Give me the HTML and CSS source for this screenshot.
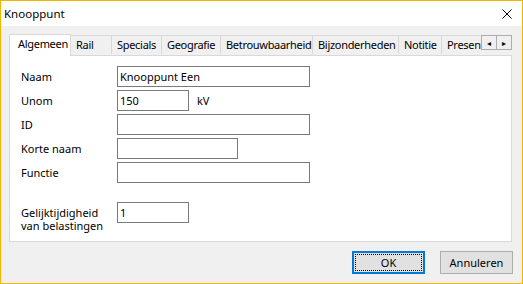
FILE: index.html
```html
<!DOCTYPE html>
<html lang="nl">
<head>
    <meta charset="UTF-8">
    <title>Knooppunt</title>
    <link rel="stylesheet" href="styles.css">
</head>
<body>
    <div class="window">
        <header class="titlebar">
            <span class="title">Knooppunt</span>
            <svg class="close" width="10" height="10" viewBox="0 0 10 10">
                <path d="M0.5 0.5 L9.5 9.5 M9.5 0.5 L0.5 9.5" stroke="#000" stroke-width="1"/>
            </svg>
        </header>

        <div class="content">
            <div class="tabs">
                <div class="tab active" style="width: 62px">Algemeen</div>
                <div class="tab" style="width: 41px">Rail</div>
                <div class="tab" style="width: 50px">Specials</div>
                <div class="tab" style="width: 59px">Geografie</div>
                <div class="tab" style="width: 92px">Betrouwbaarheid</div>
                <div class="tab" style="width: 86px">Bijzonderheden</div>
                <div class="tab" style="width: 43px">Notitie</div>
                <div class="tab cut" style="width: 39px">Presentatie</div>
                <div class="scroll">
                    <span class="scroll-btn">&#9666;</span>
                    <span class="scroll-btn">&#9656;</span>
                </div>
            </div>

            <section class="panel">
                <div class="form">
                    <label class="label">Naam</label>
                    <div class="field"><span class="input wide">Knooppunt Een</span></div>

                    <label class="label">Unom</label>
                    <div class="field"><span class="input short">150</span><span class="unit">kV</span></div>

                    <label class="label">ID</label>
                    <div class="field"><span class="input wide"></span></div>

                    <label class="label">Korte naam</label>
                    <div class="field"><span class="input medium"></span></div>

                    <label class="label">Functie</label>
                    <div class="field"><span class="input wide"></span></div>

                    <label class="label label-multi spaced">Gelijktijdigheid<br>van belastingen</label>
                    <div class="field spaced"><span class="input short">1</span></div>
                </div>
            </section>

            <footer class="buttons">
                <button class="btn default"><span class="focus">OK</span></button>
                <button class="btn">Annuleren</button>
            </footer>
        </div>
    </div>
</body>
</html>
```

FILE: styles.css
```css
* {
    margin: 0;
    padding: 0;
    box-sizing: border-box;
    font-family: 'Noto Sans', 'Open Sans', sans-serif;
}

body {
    width: 523px;
    height: 284px;
    overflow: hidden;
    font-size: 11px;
    color: #000;
}

.window {
    width: 523px;
    height: 284px;
    border: 1px solid #f4b400;
    display: flex;
    flex-direction: column;
}

.titlebar {
    height: 25px;
    background: #fff;
    display: flex;
    align-items: center;
    justify-content: space-between;
    padding: 0 10px 0 3px;
}

.title {
    font-size: 11.5px;
    line-height: 14px;
}

.close {
    display: block;
}

.content {
    flex: 1;
    background: #f0f0f0;
    padding: 8px 9px 0 8px;
}

/* tab strip */
.tabs {
    display: flex;
    align-items: flex-end;
    height: 21px;
    position: relative;
    z-index: 1;
}

.tab {
    height: 19px;
    padding: 0 0 0 5px;
    line-height: 17px;
    letter-spacing: -0.3px;
    border: 1px solid #d9d9d9;
    border-left: none;
    border-bottom: none;
    background: #f0f0f0;
    white-space: nowrap;
    overflow: hidden;
    margin-bottom: 1px;
}

.tab.active {
    height: 22px;
    margin-bottom: -1px;
    padding-left: 8px;
    line-height: 17px;
    background: #fff;
    border-left: 1px solid #d9d9d9;
}

.tab.cut {
    border-right: none;
}

.scroll {
    display: flex;
    margin-bottom: 5px;
    align-self: flex-end;
}

.scroll-btn {
    width: 16px;
    height: 15px;
    border: 1px solid #adadad;
    background: #f0f0f0;
    font-size: 8px;
    line-height: 13px;
    text-align: center;
    color: #000;
}

.scroll-btn + .scroll-btn {
    margin-left: -1px;
}

/* page */
.panel {
    width: 503px;
    height: 187px;
    background: #fff;
    border: 1px solid #d9d9d9;
    padding: 10px 0 0 11px;
}

.form {
    display: grid;
    grid-template-columns: 96px auto;
    row-gap: 3px;
}

.label {
    display: flex;
    align-items: center;
    height: 21px;
}

.label-multi {
    align-items: flex-start;
    height: auto;
    line-height: 13px;
    padding-top: 4px;
}

.spaced {
    margin-top: 16px;
}

.field {
    display: flex;
    align-items: center;
    height: 21px;
}

.input {
    height: 21px;
    border: 1px solid #7a7a7a;
    background: #fff;
    padding: 0 2px;
    line-height: 19px;
}

.input.wide {
    width: 193px;
}

.input.medium {
    width: 121px;
}

.input.short {
    width: 72px;
}

.unit {
    margin-left: 8px;
}

/* dialog buttons */
.buttons {
    display: flex;
    justify-content: flex-end;
    gap: 15px;
    padding-top: 9px;
}

.btn {
    width: 73px;
    height: 23px;
    border: 1px solid #adadad;
    background: #e1e1e1;
    font-size: 11px;
    color: #000;
}

.btn.default {
    border: 2px solid #0078d7;
    padding: 1px;
}

.focus {
    display: block;
    height: 100%;
    border: 1px dotted #000;
    line-height: 15px;
}
```
